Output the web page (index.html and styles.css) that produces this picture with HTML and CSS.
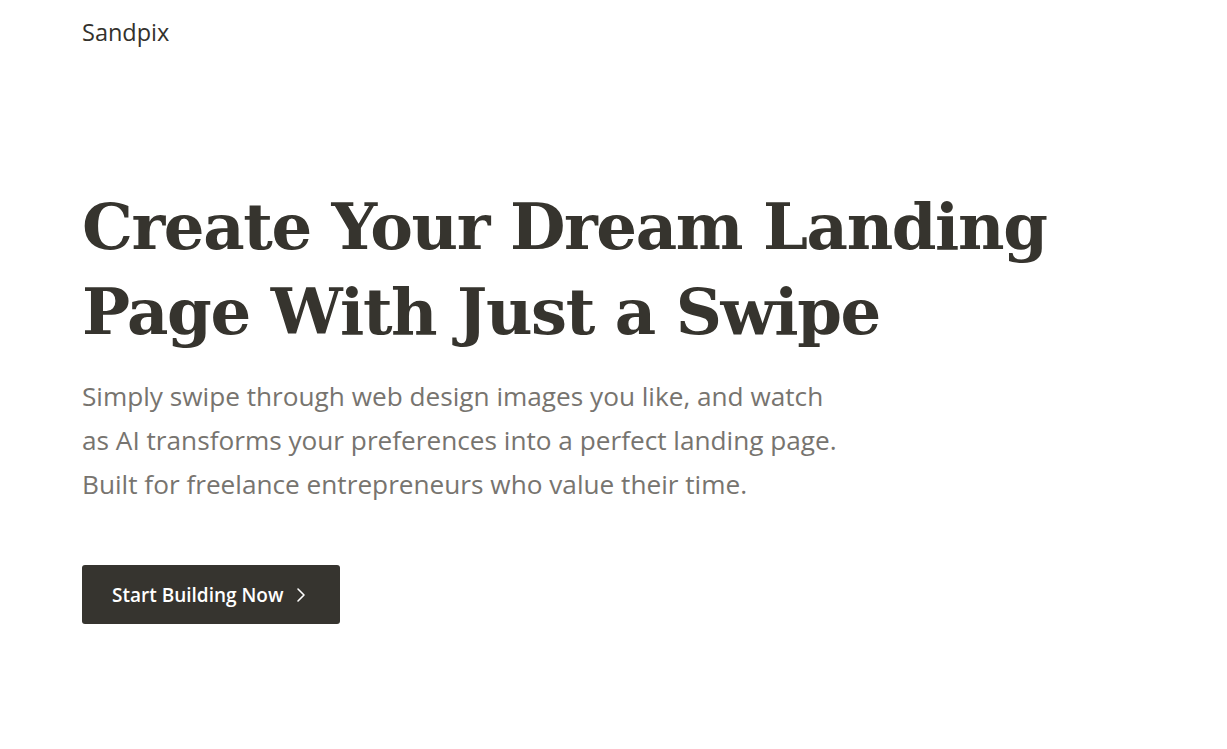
FILE: index.html
```html
<!DOCTYPE html>
<html lang="en">
<head>
<meta charset="utf-8">
<title>Sandpix</title>
<link rel="stylesheet" href="styles.css">
</head>
<body>
<header class="site-header">
  <div class="logo">Sandpix</div>
</header>
<main class="hero">
  <h1 class="hero-title">Create Your Dream Landing<br>Page With Just a Swipe</h1>
  <p class="hero-text">Simply swipe through web design images you like, and watch<br>as AI transforms your preferences into a perfect landing page.<br>Built for freelance entrepreneurs who value their time.</p>
  <a class="cta" href="#">Start Building Now
    <svg class="chev" width="10" height="16" viewBox="0 0 10 16" aria-hidden="true"><path d="M2 2l6 6-6 6" fill="none" stroke="#fff" stroke-width="1.6" stroke-linecap="round" stroke-linejoin="round"/></svg>
  </a>
</main>
</body>
</html>
```
FILE: styles.css
```css
html, body {
  margin: 0;
  padding: 0;
  background: #ffffff;
}
body {
  font-family: "Open Sans", "Noto Sans", sans-serif;
  color: #33312c;
  padding: 0 82px;
}
.site-header {
  height: 68px;
  display: flex;
  align-items: center;
}
.logo {
  font-size: 23.5px;
  color: #33312c;
  font-weight: 500;
  margin-top: -4px;
}
.hero {
  padding-top: 116px;
}
.hero-title {
  margin: 0;
  font-family: "DejaVu Serif", Georgia, serif;
  font-weight: bold;
  font-size: 64px;
  line-height: 85px;
  color: #36342e;
  letter-spacing: -1.4px;
}
.hero-text {
  margin: 20px 0 0;
  font-size: 26.2px;
  line-height: 44px;
  color: #77746f;
}
.cta {
  margin-top: 59px;
  display: inline-flex;
  align-items: center;
  gap: 13px;
  height: 59px;
  padding: 0 34px 0 30px;
  background: #36342f;
  color: #fff;
  border-radius: 3px;
  text-decoration: none;
  font-size: 19px;
  font-weight: 600;
  box-sizing: border-box;
}
```
